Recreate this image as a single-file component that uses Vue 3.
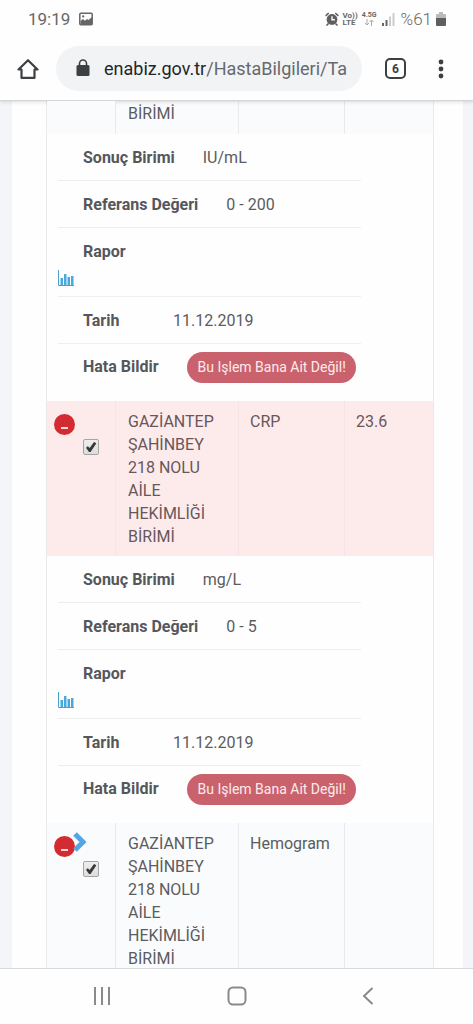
<script setup>
import { reactive } from 'vue'

const unit = 'GAZİANTEP ŞAHİNBEY 218 NOLU AİLE HEKİMLİĞİ BİRİMİ'

const results = reactive([
  { id: 1, unit: 'BİRİMİ', test: '', value: '', tail: true, open: true, resultUnit: 'IU/mL', reference: '0 - 200', date: '11.12.2019' },
  { id: 2, unit, test: 'CRP', value: '23.6', high: true, checked: true, open: true, resultUnit: 'mg/L', reference: '0 - 5', date: '11.12.2019' },
  { id: 3, unit, test: 'Hemogram', value: '', group: true, checked: true, open: false }
])
</script>

<template>
  <div class="phone">
    <header class="top">
      <div class="status">
        <span class="clock">19:19</span>
        <svg class="photo" width="14" height="14" viewBox="0 0 14 14">
          <rect x="0.8" y="1.3" width="12.4" height="11.4" rx="1" fill="none" stroke="#666" stroke-width="1.5" />
          <path d="M1.5 9 4 7l2 1.700L8 7l1.500 1L13 5v8H1.500z" fill="#666" />
          <circle cx="4.2" cy="4.400" r="1.100" fill="#666" />
        </svg>
        <span class="space"></span>
        <svg class="alarm" width="14" height="14" viewBox="0 0 14 14">
          <circle cx="7" cy="7.4" r="4.900" fill="#fefefe" stroke="#5f5f5f" stroke-width="0.500" />
          <circle cx="7" cy="7.4" r="5.300" fill="#5f5f5f" />
          <path d="M.7 3.800 3.700 1M13.300 3.800 10.300 1M3.500 11.500l-2 2M10.500 11.500l2 2" stroke="#5f5f5f" stroke-width="1.600" />
          <path d="M7 4.200v3.500h2.800" fill="none" stroke="#fff" stroke-width="1.400" />
        </svg>
        <span class="tiny volte"><span>Vo))</span><span>LTE</span></span>
        <span class="tiny network">
          <span>4.5G</span>
          <svg width="10" height="7" viewBox="0 0 10 7" fill="none" stroke="#aaa" stroke-width="1">
            <path d="M3 0v6M1 4l2 2 2-2M7.500 7V1M5.500 3l2-2 2 2" />
          </svg>
        </span>
        <svg class="signal" width="13" height="13" viewBox="0 0 13 13">
          <path d="M0 10h2v3H0zM3.500 7h2v6h-2z" fill="#666" />
          <path d="M7 3.500h2V13H7zM10.500 0h2v13h-2z" fill="#ccc" />
        </svg>
        <span class="percent">%61</span>
        <svg width="10" height="14" viewBox="0 0 10 14">
          <path d="M3 0h4v2h2q1 0 1 1v3H0V3q0-1 1-1h2z" fill="#bbb" />
          <path d="M0 6h10v7q0 1-1 1H1q-1 0-1-1z" fill="#5f5f5f" />
        </svg>
      </div>
      <div class="browser">
        <button class="icon home" type="button" aria-label="Home">
          <svg width="22" height="22" viewBox="0 0 22 22" fill="none" stroke="#3c4043" stroke-width="2.200">
            <path d="M1.500 11.500 11 2.200l9.500 9.300h-3v8.300h-13v-8.300z" stroke-linejoin="round" />
          </svg>
        </button>
        <button class="address" type="button">
          <svg width="14" height="18" viewBox="0 0 14 18">
            <rect x="0.500" y="6" width="13" height="11" rx="1.500" fill="#3c4043" />
            <path d="M3.500 7V4.500a3.500 3.500 0 0 1 7 0V7" fill="none" stroke="#3c4043" stroke-width="1.600" />
          </svg>
          <span class="url"><span class="host">enabiz.gov.tr</span>/HastaBilgileri/Ta</span>
        </button>
        <button class="tabs" type="button">6</button>
        <button class="icon menu" type="button" aria-label="Menu">
          <svg width="6" height="20" viewBox="0 0 6 20" fill="#3c4043">
            <circle cx="3" cy="3" r="2.400" /><circle cx="3" cy="10" r="2.400" /><circle cx="3" cy="17" r="2.400" />
          </svg>
        </button>
      </div>
    </header>

    <main class="page">
      <div class="card">
        <table>
          <colgroup>
            <col class="c-pick" /><col class="c-unit" /><col class="c-test" /><col />
          </colgroup>
          <tbody>
            <template v-for="r in results" :key="r.id">
              <tr class="row" :class="{ high: r.high, tail: r.tail }">
                <td class="pick">
                  <template v-if="!r.tail">
                    <button class="toggle" type="button" aria-label="Detay" @click="r.open = !r.open">
                      <span class="minus"></span>
                    </button>
                    <svg v-if="r.group" class="chevron" width="16" height="22" viewBox="0 0 16 22">
                      <path d="M3 3l8 8-8 8" fill="none" stroke="#56a5e3" stroke-width="5" />
                    </svg>
                    <label class="check">
                      <input v-model="r.checked" type="checkbox" aria-label="Seç" />
                      <svg v-if="r.checked" width="16" height="16" viewBox="0 0 16 16">
                        <path d="M3 8.800 4.800 7.200 6.700 9 11 3l2.400 1.300L7.600 13H6z" fill="#383838" />
                      </svg>
                    </label>
                  </template>
                </td>
                <td>{{ r.unit }}</td>
                <td>{{ r.test }}</td>
                <td>{{ r.value }}</td>
              </tr>
              <tr v-if="r.open">
                <td class="detail" colspan="4">
                  <ul>
                    <li><b>Sonuç Birimi</b><span>{{ r.resultUnit }}</span></li>
                    <li><b>Referans Değeri</b><span>{{ r.reference }}</span></li>
                    <li class="report">
                      <b>Rapor</b>
                      <a href="#" aria-label="Rapor">
                        <svg width="16" height="17" viewBox="0 0 16 17">
                          <path d="M0.500 0v15.500H16" fill="none" stroke="#4b9fc9" stroke-width="1" />
                          <path d="M2.500 8H5v7H2.500zM6 4h2.500v11H6zM9.500 7H12v8H9.500zM13 6h2.500v9H13z" fill="#4aa9dc" />
                        </svg>
                      </a>
                    </li>
                    <li><b>Tarih</b><span>{{ r.date }}</span></li>
                    <li class="error"><b>Hata Bildir</b><button class="pill" type="button">Bu Işlem Bana Ait Değil!</button></li>
                  </ul>
                </td>
              </tr>
            </template>
          </tbody>
        </table>
      </div>
    </main>

    <nav class="nav">
      <button type="button" aria-label="Recent apps">
        <svg width="18" height="18" viewBox="0 0 18 18" stroke="#8a8a8a" stroke-width="2"><path d="M2 0v18M9 0v18M16 0v18" /></svg>
      </button>
      <button type="button" aria-label="Home screen">
        <svg width="20" height="20" viewBox="0 0 20 20"><rect x="1.500" y="1.500" width="17" height="17" rx="4.500" fill="none" stroke="#8a8a8a" stroke-width="2" /></svg>
      </button>
      <button type="button" aria-label="Back">
        <svg width="12" height="18" viewBox="0 0 12 18"><path d="M10.500 1 2 9l8.500 8" fill="none" stroke="#8a8a8a" stroke-width="2" /></svg>
      </button>
    </nav>
  </div>
</template>

<style>
body {
  margin: 0;
  background: #fefefe;
}
</style>

<style scoped>
.phone {
  display: flex;
  flex-direction: column;
  height: 100vh;
  font-family: Roboto, "Noto Sans", sans-serif;
  font-size: 16px;
  color: #5b5c60;
}
button {
  padding: 0;
  border: 0;
  background: none;
  font: inherit;
  color: inherit;
}
svg {
  display: block;
  flex: none;
}
.top {
  position: relative;
  flex: none;
  background: #fefefe;
  border-bottom: 1px solid #d4d5d7;
  box-shadow: 0 1px 4px rgba(0, 0, 0, 0.14);
}
.status {
  display: flex;
  align-items: center;
  height: 38px;
  padding: 0 27px 0 28px;
  color: #686868;
}
.clock {
  font-size: 17px;
}
.photo {
  margin-left: 9px;
}
.space {
  flex: 1;
}
.tiny {
  display: flex;
  flex-direction: column;
  font-size: 7px;
  line-height: 7px;
  font-weight: 700;
}
.volte {
  margin-left: 4px;
  font-size: 8px;
}
.network {
  align-items: center;
  margin-left: 4px;
}
.signal {
  margin-left: 5px;
}
.percent {
  margin: 0 4px 0 6px;
  font-size: 17px;
  font-weight: 300;
}
.browser {
  display: flex;
  align-items: center;
  height: 45px;
  padding: 8px 29px 9px 17px;
}
.address {
  display: flex;
  flex: 1;
  align-items: center;
  gap: 14px;
  min-width: 0;
  height: 45px;
  margin: 0 23px 0 17px;
  padding: 0 10px 0 20px;
  border-radius: 23px;
  background: #f1f3f5;
  overflow: hidden;
}
.address svg {
  margin-top: -1px;
}
.url {
  font-size: 18px;
  white-space: nowrap;
  color: #66696d;
}
.host {
  color: #242528;
}
.tabs {
  box-sizing: border-box;
  width: 21px;
  height: 21px;
  margin-right: 32px;
  border: 2px solid #3c4043;
  border-radius: 5px;
  font-size: 12px;
  line-height: 16px;
  font-weight: 700;
  color: #3c4043;
}
.page {
  flex: 1;
  min-height: 0;
  padding: 0 10px 0 12px;
  background: #f3f5f8;
  overflow: hidden;
}
.card {
  min-height: 100%;
  padding: 0 29px 0 34px;
  background: #fefefe;
}
table {
  width: 100%;
  table-layout: fixed;
  border-collapse: separate;
  border-spacing: 0;
  border: solid #e8eaed;
  border-width: 0 0 0 1px;
}
.c-pick {
  width: 69px;
}
.c-unit {
  width: 123px;
}
.c-test {
  width: 106px;
}
td {
  padding: 9px 11px 8px;
  border-right: 1px solid #e8eaed;
  line-height: 23px;
  vertical-align: top;
}
.row td {
  background: #fafbfd;
}
.row td:nth-child(2) {
  padding-left: 12px;
}
.row.tail td {
  padding-top: 1px;
  padding-bottom: 9px;
}
.row.high td {
  border-right-color: #f7e3e5;
  background: #fdebec;
  color: #67575b;
}
.row .pick {
  position: relative;
  padding: 13px 7px 8px;
}
.toggle {
  display: flex;
  align-items: flex-end;
  justify-content: center;
  width: 21px;
  height: 21px;
  padding-bottom: 6px;
  border-radius: 50%;
  background: #d22c32;
}
.minus {
  width: 7px;
  height: 2px;
  background: #fbd8cf;
}
.chevron {
  position: absolute;
  top: 8px;
  left: 25px;
}
.check {
  position: relative;
  display: block;
  width: 16px;
  height: 16px;
  margin: 4px 0 0 29px;
}
.check input {
  display: block;
  width: 16px;
  height: 16px;
  margin: 0;
  appearance: none;
  border: 1px solid #a5a5a5;
  border-radius: 2px;
  background: linear-gradient(#eee, #dcdcdc);
}
.check svg {
  position: absolute;
  inset: 0;
  pointer-events: none;
}
.detail {
  padding: 0 11px;
}
ul {
  max-width: 303px;
  margin: 0;
  padding: 0;
  list-style: none;
}
li {
  display: flex;
  gap: 28px;
  padding: 12px 0 11px 25px;
  border-bottom: 1px solid #eceef0;
}
li b {
  min-width: 62px;
  font-weight: 700;
  color: #56575b;
}
.report {
  flex-direction: column;
  gap: 7px;
  padding-bottom: 9px;
}
.report a {
  align-self: flex-start;
  margin-left: -25px;
}
.error {
  padding-top: 8px;
  padding-bottom: 18px;
  border-bottom: 0;
}
.error b {
  padding-top: 3px;
}
.pill {
  flex: none;
  height: 31px;
  padding: 0 10px 0 11px;
  border-radius: 16px;
  background: #ca626d;
  font-size: 14px;
  color: #fdebec;
}
.nav {
  display: flex;
  flex: none;
  justify-content: space-between;
  align-items: center;
  height: 54px;
  padding: 0 99px 1px 93px;
  border-top: 1px solid #d9dadc;
  background: #fefefe;
}
</style>
